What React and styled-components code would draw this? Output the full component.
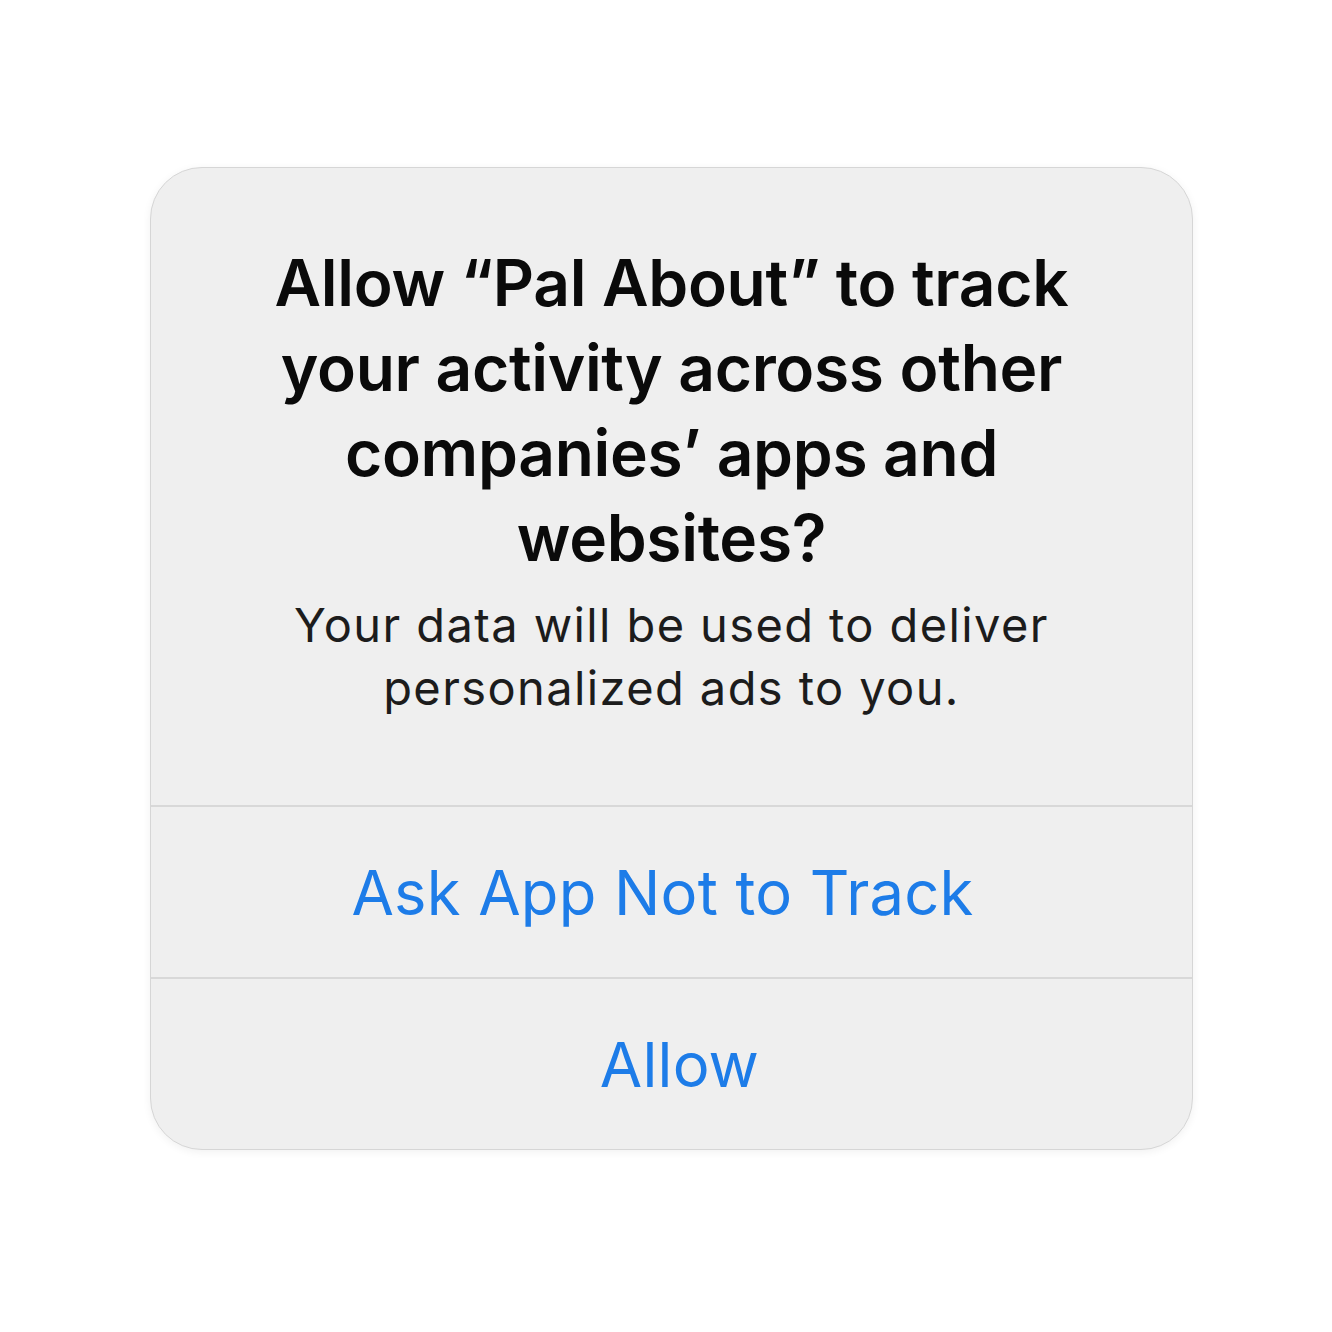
import React from "react";
import styled, { createGlobalStyle } from "styled-components";

const Global = createGlobalStyle`
  html, body { margin: 0; padding: 0; background: #ffffff; }
  body { font-family: Inter, "Noto Sans", sans-serif; -webkit-font-smoothing: antialiased; }
`;

const Page = styled.div`
  width: 1332px;
  height: 1332px;
  display: flex;
  justify-content: center;
  align-items: flex-start;
  padding-top: 167px;
  box-sizing: border-box;
`;

const Card = styled.div`
  width: 1043px;
  height: 983px;
  box-sizing: border-box;
  margin-left: 11px;
  background: #efefef;
  border: 1.5px solid #d6d6d6;
  border-radius: 52px;
  box-shadow: 0 2px 8px rgba(0, 0, 0, 0.06);
  display: flex;
  flex-direction: column;
  overflow: hidden;
`;

const Content = styled.div`
  height: 639px;
  box-sizing: border-box;
  padding-top: 72px;
  display: flex;
  flex-direction: column;
  align-items: center;
  text-align: center;
  border-bottom: 2px solid #d8d8d8;
`;

const Title = styled.h1`
  margin: 0;
  font-family: Inter, sans-serif;
  font-weight: 600;
  font-size: 64px;
  line-height: 85px;
  color: #0a0a0a;
  letter-spacing: -0.3px;
`;

const Message = styled.p`
  margin: 13px 0 0;
  font-family: Inter, sans-serif;
  font-weight: 400;
  font-size: 47px;
  line-height: 63px;
  color: #1c1c1c;
  letter-spacing: 1.4px;
`;

const Action = styled.button`
  appearance: none;
  border: none;
  background: transparent;
  height: ${(p) => p.$h}px;
  width: 100%;
  box-sizing: border-box;
  display: flex;
  align-items: center;
  justify-content: center;
  font-family: Inter, sans-serif;
  font-weight: 400;
  font-size: 61.5px;
  color: #1d7ce8;
  padding: 0 ${(p) => p.$right || 0}px 0 ${(p) => p.$left || 0}px;
  border-bottom: ${(p) => (p.$divider ? "2px solid #d8d8d8" : "none")};
  letter-spacing: 0.2px;
`;

export default function App() {
  return (
    <>
      <Global />
      <Page>
        <Card>
          <Content>
            <Title>
              Allow “Pal About” to track
              <br />
              your activity across other
              <br />
              companies’ apps and
              <br />
              websites?
            </Title>
            <Message>
              Your data will be used to deliver
              <br />
              personalized ads to you.
            </Message>
          </Content>
          <Action $h={172} $right={18} $divider>
            Ask App Not to Track
          </Action>
          <Action $h={170} $left={16}>
            Allow
          </Action>
        </Card>
      </Page>
    </>
  );
}
